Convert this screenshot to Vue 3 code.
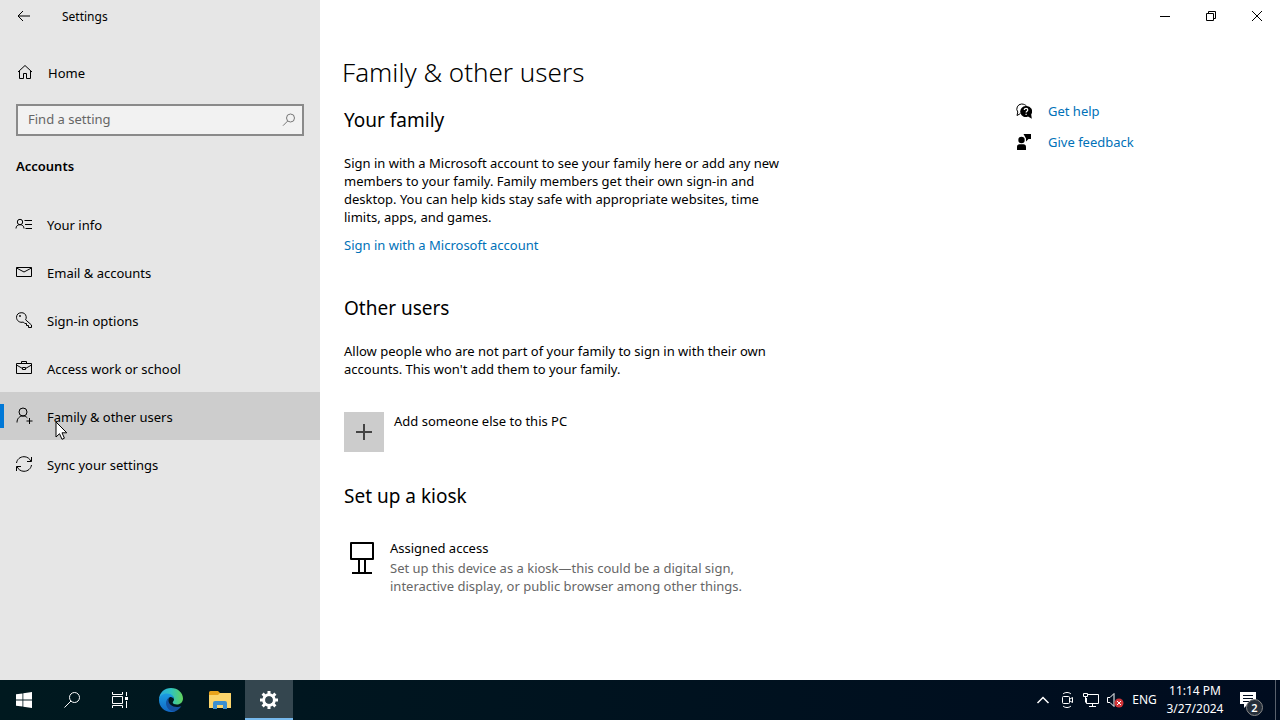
<script setup>
import { ref } from 'vue'

const search = ref('')
const current = ref('family')

const navItems = [
  { id: 'info', label: 'Your info' },
  { id: 'email', label: 'Email & accounts' },
  { id: 'signin', label: 'Sign-in options' },
  { id: 'work', label: 'Access work or school' },
  { id: 'family', label: 'Family & other users' },
  { id: 'sync', label: 'Sync your settings' }
]
</script>

<template>
  <div class="desktop">
    <div class="window">
      <aside class="sidebar">
        <div class="titlebar">
          <button class="back" aria-label="Back">
            <svg width="14" height="12" viewBox="0 0 14 12">
              <path d="M13 6H1M6 1L1 6l5 5" />
            </svg>
          </button>
          <span>Settings</span>
        </div>
        <a class="nav-link home" href="#home">
          <svg width="16" height="16" viewBox="0 0 16 16">
            <path d="M1 8l7-6.5L15 8M2.500 7v7.500h4v-5h3v5h4V7" />
          </svg>
          <span>Home</span>
        </a>
        <div class="search">
          <input v-model="search" type="text" placeholder="Find a setting" aria-label="Find a setting" />
          <svg width="14" height="14" viewBox="0 0 14 14">
            <circle cx="8.500" cy="5" r="4" />
            <path d="M5.700 8L1 12.700" />
          </svg>
        </div>
        <h2 class="group">Accounts</h2>
        <nav>
          <a
            v-for="item in navItems"
            :key="item.id"
            class="nav-link"
            :class="{ active: item.id === current }"
            :href="'#' + item.id"
            @click="current = item.id"
          >
            <svg width="18" height="18" viewBox="0 0 18 18">
              <g v-if="item.id === 'info'">
                <circle cx="5" cy="7" r="2.700" />
                <path d="M1 13.500c0-2.500 1.700-3.800 4-3.800s4 1.300 4 3.800M9.500 5.500H17M10 9.500h7M10.500 13.500H17" />
              </g>
              <g v-else-if="item.id === 'email'">
                <path d="M1.500 4.500h15v9h-15zM1.500 5l7.500 4 7.500-4" />
              </g>
              <g v-else-if="item.id === 'signin'">
                <path d="M10.600 8.800l5.900 5.200v2.500h-3v-2h-2v-2H9.800L8.300 11C5 12.200 1.500 9.800 1.500 6.300a4.900 4.900 0 0 1 9.700-.6c.2 1.100-.1 2.200-.6 3.100z" />
                <circle cx="5" cy="5" r=".6" />
              </g>
              <g v-else-if="item.id === 'work'">
                <path d="M1.500 4.500h15v10h-15zM6.500 4.500v-2h5v2M1.500 6l6 3.500M16.500 6l-6 3.500M7.500 8.500h3v2h-3z" />
              </g>
              <g v-else-if="item.id === 'family'">
                <circle cx="8" cy="5" r="4" />
                <path d="M2 15.500C2 11.500 4.500 9 8 9c1.800 0 3.300.7 4.400 1.900M14.500 11v6M11.500 14h6" />
              </g>
              <g v-else>
                <path d="M1.500 8C2 4.500 5 1.700 9 1.700c3.200 0 5.800 1.800 7 4.800M16.500 2v4.500H12M16.500 10c-.5 3.500-3.500 6.300-7.500 6.300-3.200 0-5.800-1.800-7-4.800M1.500 16v-4.500H6" />
              </g>
            </svg>
            <span>{{ item.label }}</span>
            <svg v-if="item.id === 'family'" class="cursor" width="14" height="20" viewBox="0 0 14 20">
              <path d="M1 1v15l3.500-3.300L7 18.300l2.400-1.100L7 11.800h4.800z" />
            </svg>
          </a>
        </nav>
      </aside>

      <div class="content">
        <div class="controls">
          <button aria-label="Minimize">
            <svg width="12" height="12" viewBox="0 0 12 12"><path d="M1 6.500h10" /></svg>
          </button>
          <button aria-label="Restore">
            <svg width="12" height="12" viewBox="0 0 12 12">
              <path d="M1.500 3.500h7v7h-7zM3.500 3.500v-2h7v7h-2" />
            </svg>
          </button>
          <button aria-label="Close">
            <svg width="12" height="12" viewBox="0 0 12 12"><path d="M1 1l10 10M11 1L1 11" /></svg>
          </button>
        </div>
        <div class="columns">
          <main>
            <h1>Family &amp; other users</h1>
            <section>
              <h2>Your family</h2>
              <p>
                Sign in with a Microsoft account to see your family here or add any new members to your
                family. Family members get their own sign-in and desktop. You can help kids stay safe with
                appropriate websites, time limits, apps, and games.
              </p>
              <a class="action" href="#microsoft">Sign in with a Microsoft account</a>
            </section>
            <section>
              <h2>Other users</h2>
              <p>
                Allow people who are not part of your family to sign in with their own accounts. This won't
                add them to your family.
              </p>
              <button class="add">
                <span class="tile">
                  <svg width="18" height="18" viewBox="0 0 18 18"><path d="M9 1v16M1 9h16" /></svg>
                </span>
                <span>Add someone else to this PC</span>
              </button>
            </section>
            <section>
              <h2>Set up a kiosk</h2>
              <button class="kiosk">
                <svg width="26" height="34" viewBox="0 0 26 34">
                  <path d="M2 2h22v16H2zM10 18v14M16 18v14M3 32h20" />
                </svg>
                <span>
                  <span class="kiosk-title">Assigned access</span>
                  <span class="kiosk-text">
                    Set up this device as a kiosk—this could be a digital sign, interactive display, or
                    public browser among other things.
                  </span>
                </span>
              </button>
            </section>
          </main>
          <div class="help">
            <a href="#help">
              <svg width="16" height="16" viewBox="0 0 16 16">
                <path d="M4.500 10.500L1 12.500l.8-3.500A5 5 0 0 1 5.500 1C8 1 9.500 2 10.500 3" fill="none" stroke="#000" />
                <path d="M10 3a5.500 5.500 0 1 0 2 10.500l3.800 2.300-.6-4.300A5.500 5.500 0 0 0 10 3z" />
                <path d="M8.300 7c0-2.200 3.500-2.200 3.500 0 0 1.200-1.700 1.200-1.700 2.500M10.100 10.700V12" fill="none" stroke="#fff" stroke-width="1.200" />
              </svg>
              <span>Get help</span>
            </a>
            <a href="#feedback">
              <svg width="16" height="16" viewBox="0 0 16 16">
                <circle cx="5.500" cy="6" r="3.200" />
                <path d="M1 16v-3c0-1.700 1-2.700 2.500-2.700h4c1.500 0 2.500 1 2.500 2.700v3zM7.500 0H15v5h-2.500L10 7.500V4.500z" />
              </svg>
              <span>Give feedback</span>
            </a>
          </div>
        </div>
      </div>
    </div>

    <footer class="taskbar">
      <button aria-label="Start">
        <svg width="16" height="16" viewBox="0 0 16 16">
          <path d="M0 2.300L6.500 1.400V7.600H0zM7.300 1.300L16 0v7.600H7.300zM0 8.400h6.500v6.200L0 13.700zM7.300 8.400H16V16l-8.700-1.300z" fill="#fff" />
        </svg>
      </button>
      <button aria-label="Search">
        <svg class="line" width="18" height="18" viewBox="0 0 18 18">
          <circle cx="11.500" cy="6.500" r="5" />
          <path d="M8 10l-6.500 6.500" />
        </svg>
      </button>
      <button aria-label="Task view">
        <svg class="line" width="18" height="18" viewBox="0 0 18 18">
          <path d="M1.500 1v2.500h10V1M1.500 5.500h10v7h-10zM1.500 17v-2.500h10V17M15.500 1v4M15.500 10v7" />
          <path d="M14 6h3v3h-3z" fill="#fff" stroke="none" />
        </svg>
      </button>
      <div class="apps">
        <button aria-label="Edge">
          <svg width="24" height="24" viewBox="0 0 24 24">
            <defs>
              <linearGradient id="edgeTop" x1="0" y1="0" x2="1" y2="0">
                <stop offset="0" stop-color="#2aa9e0" />
                <stop offset=".5" stop-color="#2fc3c0" />
                <stop offset="1" stop-color="#62d35a" />
              </linearGradient>
              <linearGradient id="edgeLow" x1="0" y1="0" x2="0" y2="1">
                <stop offset="0" stop-color="#1b9de2" />
                <stop offset="1" stop-color="#1267c4" />
              </linearGradient>
            </defs>
            <path d="M0 11C.5 4.500 5.500 0 12 0c7 0 12 5 12 10.500 0 3.800-2.800 6-6 6-2.500 0-4.300-1-4.300-2 0-.7 1.300-1.300 1.300-3.200C15 8.500 12 6.500 8.500 6.500 4.500 6.500 1.500 8.500 0 11z" fill="url(#edgeTop)" />
            <path d="M0 12c0-4 4-6.500 8-6.500 4.500 0 7 3 7 5.500-1-1.500-2.500-2-4-2-2 1-3 3-3 5 0 5 4.500 9 9.500 8.500C16 23.500 14 24 12 24 5.300 24 0 18.700 0 12z" fill="url(#edgeLow)" />
            <path d="M10.800 9C8.500 10 7 12.500 7 15c0 5 4.500 9 9 8.300 2.700-.8 5-2.700 6.300-5.300-1.300.7-3 1-4.300 1-5 0-8.500-3-8.500-6.500 0-1.500.5-2.700 1.300-3.500z" fill="#1451a0" />
          </svg>
        </button>
        <button aria-label="File Explorer">
          <svg width="22" height="18" viewBox="0 0 22 18">
            <path d="M0 1.500Q0 0 1.500 0H9l2 2h11v5H0z" fill="#e8a31c" />
            <path d="M0 4h9l2-2h10q1 0 1 1v14H0z" fill="#fbd56c" />
            <path d="M4 18v-6q0-2 2-2h10q2 0 2 2v6h-4v-4H8v4z" fill="#3b8fd0" />
          </svg>
        </button>
        <button class="running" aria-label="Settings">
          <svg width="20" height="20" viewBox="0 0 20 20">
            <circle cx="10" cy="10" r="5.300" fill="none" stroke="#fff" stroke-width="3" />
            <path d="M10 1v4M10 15v4M1 10h4M15 10h4M3.600 3.600l2.900 2.900M13.500 13.500l2.900 2.900M3.600 16.400l2.900-2.900M13.500 6.500l2.900-2.900" fill="none" stroke="#fff" stroke-width="3" />
            <circle cx="10" cy="10" r="3.500" fill="#34464f" />
          </svg>
        </button>
      </div>
      <div class="tray">
        <button aria-label="Show hidden icons">
          <svg class="line bold" width="14" height="8" viewBox="0 0 14 8"><path d="M1.500 7L7 1.500 12.500 7" /></svg>
        </button>
        <button aria-label="Meet now">
          <svg class="line" width="14" height="18" viewBox="0 0 14 18">
            <rect x="2.500" y="5.500" width="7" height="7" rx="1" />
            <path d="M10 8l2.500-1.500v5L10 10M3 3c2-2 6-2 8 0M3 15c2 2 6 2 8 0" />
          </svg>
        </button>
        <button aria-label="Network">
          <svg class="line" width="18" height="16" viewBox="0 0 18 16">
            <path d="M5 2.500h11.500v9H4.500V6M10.500 11.500v3M7 14.500h7M1.500 1.500h4v3h-4zM3.500 4.500v6" />
          </svg>
        </button>
        <button aria-label="Volume muted">
          <svg width="18" height="16" viewBox="0 0 18 16">
            <path d="M1.500 5.500H4l4-4v13l-4-4H1.500z" fill="none" stroke="#fff" />
            <circle cx="13" cy="11" r="4.500" fill="#d13438" />
            <path d="M11 9l4 4M15 9l-4 4" stroke="#fff" />
          </svg>
        </button>
        <button class="lang">ENG</button>
        <button class="clock">
          <span>11:14 PM</span>
          <span>3/27/2024</span>
        </button>
        <button class="notice" aria-label="Notifications">
          <svg width="16" height="16" viewBox="0 0 16 16">
            <path d="M0 0h16v12H8l-4 4v-4H0z" fill="#fff" />
            <path d="M3 3.500h10M3 6.500h10M3 9.500h6" stroke="#000c1f" />
          </svg>
          <span class="badge">2</span>
        </button>
        <button class="peek" aria-label="Show desktop"></button>
      </div>
    </footer>
  </div>
</template>

<style>
body {
  margin: 0;
}
</style>

<style scoped>
.desktop {
  display: flex;
  flex-direction: column;
  min-height: 100vh;
  font-family: 'Segoe UI', 'Noto Sans', 'Open Sans', sans-serif;
  font-size: 13px;
  line-height: 18px;
  color: #000;
  background: #fff;
}
button {
  display: flex;
  align-items: center;
  justify-content: center;
  padding: 0;
  border: 0;
  background: none;
  font: inherit;
  color: inherit;
}
a {
  color: #0071b8;
  text-decoration: none;
}
h1,
h2,
p {
  margin: 0;
  font-weight: 400;
}
svg {
  flex: none;
}
.window {
  display: flex;
  flex: 1;
}
.sidebar {
  flex: none;
  width: 320px;
  background: #e6e6e6;
}
.sidebar svg,
.controls svg {
  fill: none;
  stroke: #000;
}
.titlebar {
  display: flex;
  align-items: center;
  gap: 14px;
  height: 32px;
  font-size: 12px;
}
.titlebar span,
.nav-link span {
  padding-top: 2px;
}
.back {
  width: 48px;
  height: 32px;
}
.nav-link {
  position: relative;
  display: flex;
  align-items: center;
  gap: 14px;
  height: 48px;
  padding: 0 15px;
  color: #000;
}
.nav-link.home {
  gap: 15px;
  margin-top: 16px;
  padding-left: 17px;
}
.nav-link.active {
  background: #cdcdcd;
}
.nav-link.active::before {
  content: '';
  position: absolute;
  left: 0;
  top: 12px;
  width: 4px;
  height: 24px;
  background: #0078d7;
}
.sidebar .cursor {
  position: absolute;
  left: 55px;
  top: 29px;
  fill: #fff;
}
.search {
  display: flex;
  align-items: center;
  box-sizing: border-box;
  height: 32px;
  margin: 8px 16px 0;
  padding: 0 6px 0 10px;
  border: 2px solid #8a8a8a;
  background: #f2f2f2;
}
.search input {
  flex: 1;
  min-width: 0;
  padding: 0 0 2px;
  border: 0;
  outline: 0;
  background: none;
  font: inherit;
}
.search input::placeholder {
  color: #666;
  opacity: 1;
}
.search svg {
  stroke: #777;
}
.group {
  margin: 21px 16px 25px;
  font-size: 13px;
  font-weight: 600;
}
.content {
  flex: 1;
  min-width: 0;
}
.controls {
  display: flex;
  justify-content: flex-end;
}
.controls button {
  width: 46px;
  height: 32px;
}
.columns {
  display: grid;
  grid-template-columns: minmax(0, 1fr) 264px;
  padding-left: 22px;
}
h1 {
  padding-top: 20px;
  font-size: 26px;
  line-height: 40px;
  font-weight: 300;
}
section {
  max-width: 450px;
  margin-bottom: 26px;
  padding-left: 2px;
}
section h2 {
  padding: 14px 0 20px;
  font-size: 19px;
  line-height: 28px;
}
.action {
  display: block;
  margin-top: 10px;
}
.add {
  align-items: flex-start;
  gap: 10px;
  margin: 34px 0 -10px;
}
.tile {
  display: flex;
  align-items: center;
  justify-content: center;
  width: 40px;
  height: 40px;
  background: #ccc;
}
.tile svg {
  stroke: #444;
  stroke-width: 2;
}
.kiosk {
  align-items: flex-start;
  gap: 15px;
  margin-top: 9px;
  padding-left: 5px;
  text-align: left;
}
.kiosk > svg {
  margin-top: 2px;
  fill: none;
  stroke: #000;
  stroke-width: 2;
  stroke-linejoin: round;
}
.kiosk-title,
.kiosk-text {
  display: block;
}
.kiosk-text {
  margin-top: 2px;
  color: #666;
}
.help {
  display: flex;
  flex-direction: column;
  gap: 13px;
  padding-top: 70px;
}
.help a {
  display: flex;
  align-items: center;
  gap: 16px;
}
.taskbar {
  display: flex;
  height: 40px;
  background: linear-gradient(90deg, #00191f, #000c1f);
  color: #fff;
}
.taskbar button {
  width: 48px;
  height: 40px;
}
.line {
  fill: none;
  stroke: #fff;
}
.line.bold {
  stroke-width: 1.5;
}
.apps {
  display: flex;
  gap: 1px;
  margin-left: 3px;
}
.taskbar .running {
  box-sizing: border-box;
  border-top: 2px solid #34464f;
  border-bottom: 2px solid #76b9ed;
  background: #34464f;
}
.tray {
  display: flex;
  margin-left: auto;
  font-size: 12px;
}
.tray button {
  width: 24px;
}
.tray .lang {
  width: 35px;
}
.tray .clock {
  flex-direction: column;
  width: 66px;
}
.tray .notice {
  position: relative;
  width: 39px;
  margin-right: 8px;
}
.badge {
  position: absolute;
  left: 18px;
  top: 19px;
  box-sizing: border-box;
  width: 17px;
  height: 17px;
  border: 1px solid #888;
  border-radius: 50%;
  background: #262f3a;
  font-size: 11px;
  font-weight: 600;
  line-height: 15px;
}
.tray .peek {
  width: 5px;
  border-left: 1px solid #59616d;
}
</style>
